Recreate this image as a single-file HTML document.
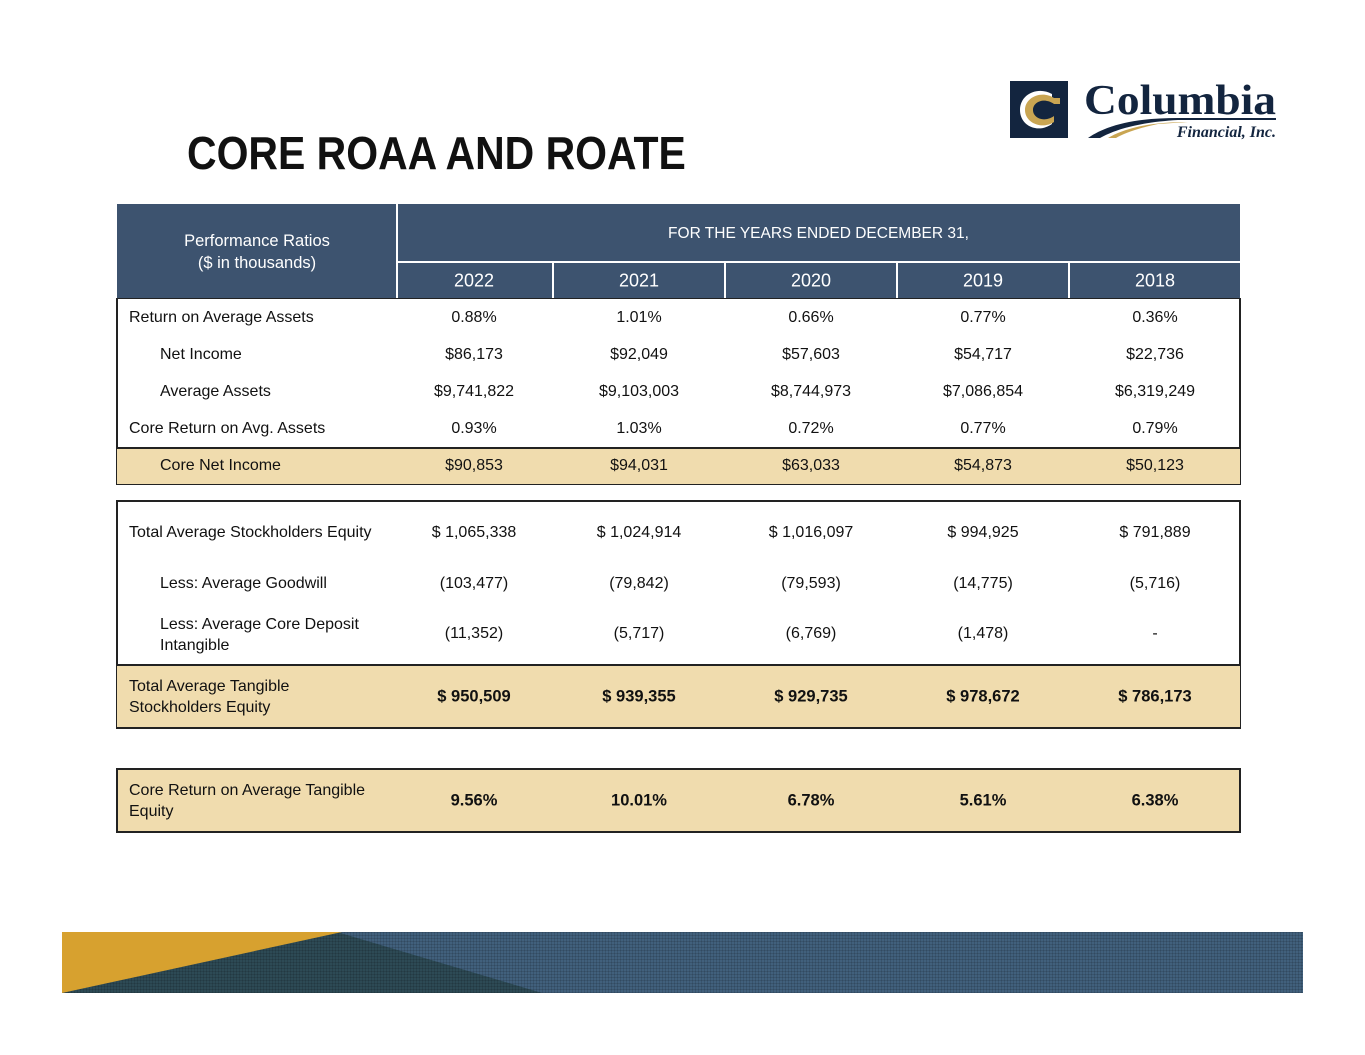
<!DOCTYPE html>
<html><head><meta charset="utf-8"><style>
*{margin:0;padding:0;box-sizing:border-box}
body{width:1365px;height:1055px;background:#fff;position:relative;overflow:hidden;font-family:"Liberation Sans",Arial,sans-serif;color:#111}
.a{position:absolute}
.t{position:absolute;font-size:16px;white-space:nowrap;transform:translateY(-50%)}
.c{text-align:center;width:160px;margin-left:-80px}
.hd{background:#3d536f;color:#fff}
.box{position:absolute;left:116px;width:1125px;border:2px solid #222}
.beige{background:#f0dcae}
.b{font-weight:bold;font-size:16.5px}
</style></head><body>
<div class="a" style="left:187px;top:126px;font-size:46px;font-weight:bold;transform:scaleX(0.89);transform-origin:left top;white-space:nowrap">CORE ROAA AND ROATE</div>

<!-- logo -->
<svg class="a" style="left:1008px;top:80px" width="280" height="60" viewBox="0 0 280 60">
<rect x="2" y="1" width="58" height="57" fill="#13253f"/>
<path d="M44 14 C30 6 12 14 12 30 C12 46 30 54 44 44 L44 38 C32 46 20 40 20 30 C20 20 32 14 44 20 Z" fill="#fff"/>
<path d="M46 18 C34 10 17 17 17 30 C17 43 34 50 46 42 L46 36 C36 43 25 38 25 30 C25 22 36 17 46 24 L52 24 L52 18 Z" fill="#c9a552"/>
<text x="76" y="34" font-family="Liberation Serif,serif" font-weight="bold" font-size="42" textLength="192" lengthAdjust="spacingAndGlyphs" fill="#13253f">Columbia</text>
<path d="M80 58 C100 44 130 38 170 38 L268 38 L268 40 L170 40 C135 42 110 48 92 58 Z" fill="#13253f"/>
<path d="M100 58 C120 46 150 42 180 42 L150 44 C130 48 115 54 108 58 Z" fill="#c9a552"/>
<text x="268" y="57" text-anchor="end" font-family="Liberation Serif,serif" font-style="italic" font-weight="bold" font-size="16" fill="#13253f">Financial, Inc.</text>
</svg>

<!-- header -->
<div class="a hd" style="left:117px;top:204px;width:1123px;height:95px"></div>
<div class="a" style="left:396px;top:204px;width:2px;height:95px;background:#fff"></div>
<div class="a" style="left:397px;top:261px;width:843px;height:2px;background:#fff"></div>
<div class="a" style="left:552px;top:262px;width:2px;height:37px;background:#fff"></div>
<div class="a" style="left:724px;top:262px;width:2px;height:37px;background:#fff"></div>
<div class="a" style="left:896px;top:262px;width:2px;height:37px;background:#fff"></div>
<div class="a" style="left:1068px;top:262px;width:2px;height:37px;background:#fff"></div>
<div class="t" style="left:117px;top:252px;width:280px;text-align:center;color:#fff;font-size:16.5px;line-height:22px">Performance Ratios<br>($ in thousands)</div>
<div class="t" style="left:397px;top:234px;width:843px;text-align:center;color:#fff;font-size:15.5px">FOR THE YEARS ENDED DECEMBER 31,</div>
<div class="t c" style="left:474px;top:281px;color:#fff;font-size:18px">2022</div>
<div class="t c" style="left:639px;top:281px;color:#fff;font-size:18px">2021</div>
<div class="t c" style="left:811px;top:281px;color:#fff;font-size:18px">2020</div>
<div class="t c" style="left:983px;top:281px;color:#fff;font-size:18px">2019</div>
<div class="t c" style="left:1155px;top:281px;color:#fff;font-size:18px">2018</div>

<!-- block 1 -->
<div class="box" style="top:298px;height:187px;border-top-width:1px"></div>
<div class="a beige" style="left:117px;top:447px;width:1123px;height:37px;border-top:2px solid #222"></div>

<div class="t" style="left:129px;top:318px">Return on Average Assets</div>
<div class="t c" style="left:474px;top:318px">0.88%</div><div class="t c" style="left:639px;top:318px">1.01%</div><div class="t c" style="left:811px;top:318px">0.66%</div><div class="t c" style="left:983px;top:318px">0.77%</div><div class="t c" style="left:1155px;top:318px">0.36%</div>

<div class="t" style="left:160px;top:355px">Net Income</div>
<div class="t c" style="left:474px;top:355px">$86,173</div><div class="t c" style="left:639px;top:355px">$92,049</div><div class="t c" style="left:811px;top:355px">$57,603</div><div class="t c" style="left:983px;top:355px">$54,717</div><div class="t c" style="left:1155px;top:355px">$22,736</div>

<div class="t" style="left:160px;top:392px">Average Assets</div>
<div class="t c" style="left:474px;top:392px">$9,741,822</div><div class="t c" style="left:639px;top:392px">$9,103,003</div><div class="t c" style="left:811px;top:392px">$8,744,973</div><div class="t c" style="left:983px;top:392px">$7,086,854</div><div class="t c" style="left:1155px;top:392px">$6,319,249</div>

<div class="t" style="left:129px;top:429px">Core Return on Avg. Assets</div>
<div class="t c" style="left:474px;top:429px">0.93%</div><div class="t c" style="left:639px;top:429px">1.03%</div><div class="t c" style="left:811px;top:429px">0.72%</div><div class="t c" style="left:983px;top:429px">0.77%</div><div class="t c" style="left:1155px;top:429px">0.79%</div>

<div class="t" style="left:160px;top:466px">Core Net Income</div>
<div class="t c" style="left:474px;top:466px">$90,853</div><div class="t c" style="left:639px;top:466px">$94,031</div><div class="t c" style="left:811px;top:466px">$63,033</div><div class="t c" style="left:983px;top:466px">$54,873</div><div class="t c" style="left:1155px;top:466px">$50,123</div>

<!-- block 2 -->
<div class="box" style="top:500px;height:229px"></div>
<div class="a beige" style="left:117px;top:664px;width:1123px;height:63px;border-top:2px solid #222"></div>

<div class="t" style="left:129px;top:533px">Total Average Stockholders Equity</div>
<div class="t c" style="left:474px;top:533px">$ 1,065,338</div><div class="t c" style="left:639px;top:533px">$ 1,024,914</div><div class="t c" style="left:811px;top:533px">$ 1,016,097</div><div class="t c" style="left:983px;top:533px">$ 994,925</div><div class="t c" style="left:1155px;top:533px">$ 791,889</div>

<div class="t" style="left:160px;top:584px">Less: Average Goodwill</div>
<div class="t c" style="left:474px;top:584px">(103,477)</div><div class="t c" style="left:639px;top:584px">(79,842)</div><div class="t c" style="left:811px;top:584px">(79,593)</div><div class="t c" style="left:983px;top:584px">(14,775)</div><div class="t c" style="left:1155px;top:584px">(5,716)</div>

<div class="t" style="left:160px;top:635px;line-height:21px">Less: Average Core Deposit<br>Intangible</div>
<div class="t c" style="left:474px;top:634px">(11,352)</div><div class="t c" style="left:639px;top:634px">(5,717)</div><div class="t c" style="left:811px;top:634px">(6,769)</div><div class="t c" style="left:983px;top:634px">(1,478)</div><div class="t c" style="left:1155px;top:634px">-</div>

<div class="t" style="left:129px;top:697px;line-height:21px">Total Average Tangible<br>Stockholders Equity</div>
<div class="t c b" style="left:474px;top:697px">$ 950,509</div><div class="t c b" style="left:639px;top:697px">$ 939,355</div><div class="t c b" style="left:811px;top:697px">$ 929,735</div><div class="t c b" style="left:983px;top:697px">$ 978,672</div><div class="t c b" style="left:1155px;top:697px">$ 786,173</div>

<!-- block 3 -->
<div class="box beige" style="top:768px;height:65px"></div>
<div class="t" style="left:129px;top:801px;line-height:21px">Core Return on Average Tangible<br>Equity</div>
<div class="t c b" style="left:474px;top:801px">9.56%</div><div class="t c b" style="left:639px;top:801px">10.01%</div><div class="t c b" style="left:811px;top:801px">6.78%</div><div class="t c b" style="left:983px;top:801px">5.61%</div><div class="t c b" style="left:1155px;top:801px">6.38%</div>

<!-- footer bar -->
<svg class="a" style="left:62px;top:932px" width="1241" height="61" viewBox="0 0 1241 61">
<defs><pattern id="g" width="3" height="3" patternUnits="userSpaceOnUse"><rect width="1" height="3" fill="#000" opacity="0.12"/><rect width="3" height="1" fill="#000" opacity="0.12"/></pattern></defs>
<rect width="1241" height="61" fill="#41607c"/>
<polygon points="0,0 275,0 480,61 0,61" fill="#2d4a55"/>
<rect width="1241" height="61" fill="url(#g)"/>
<polygon points="0,0 280,0 0,61" fill="#d7a12f"/>
</svg>
</body></html>
